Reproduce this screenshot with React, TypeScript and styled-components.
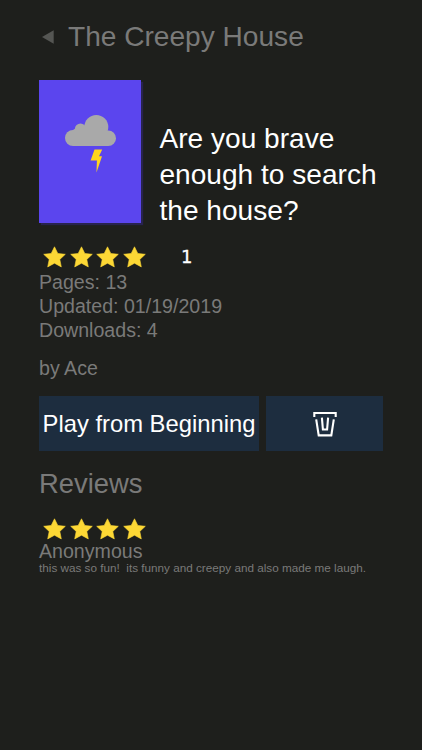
import React from "react";
import styled, { createGlobalStyle } from "styled-components";

const GlobalStyle = createGlobalStyle`
  * { box-sizing: border-box; }
  body {
    margin: 0;
    background: #1e1f1c;
    font-family: "Liberation Sans", Arial, sans-serif;
    color: #7a7a79;
  }
  h1, h2, p { margin: 0; font-weight: 400; }
`;

const Page = styled.main`
  display: flex;
  flex-direction: column;
  height: 750px;
  padding: 21px 39px 0 39px;
  overflow: hidden;
  background: #1e1f1c;
`;

const Header = styled.header`
  display: flex;
  align-items: center;
  height: 32px;
  padding-left: 3px;
`;

const BackButton = styled.button`
  display: flex;
  width: 26px;
  padding: 0;
  border: 0;
  background: none;
`;

const Title = styled.h1`
  font-size: 28.1px;
  line-height: 32px;
  white-space: nowrap;
`;

const Summary = styled.section`
  display: flex;
  align-items: flex-end;
  height: 143px;
  margin-top: 27px;
`;

const Cover = styled.div`
  flex: none;
  width: 102px;
  height: 143px;
  background: #5b45ee;
  box-shadow: 2px 2px 1px #28234d;
`;

const Tagline = styled.p`
  width: 240px;
  margin-left: 18.5px;
  margin-right: -17px;
  margin-bottom: -6px;
  font-size: 28.1px;
  line-height: 36px;
  color: #fff;
`;

const Rating = styled.div<{ $top: number }>`
  display: flex;
  align-items: center;
  height: 24px;
  margin-top: ${(p) => p.$top}px;
  padding-left: 4px;
`;

const Stars = styled.div`
  display: flex;
  gap: 3.7px;
`;

const RatingCount = styled.span`
  margin-left: 35px;
  font-family: "DejaVu Sans", sans-serif;
  font-size: 18px;
  line-height: 24px;
  color: #fff;
  -webkit-text-stroke: 0.3px #fff;
`;

const Meta = styled.div`
  margin-top: 1px;
  font-size: 19.6px;
  line-height: 24px;
`;

const Author = styled.p`
  margin-top: 14px;
  font-size: 19.6px;
  line-height: 24px;
`;

const Actions = styled.div`
  display: grid;
  grid-template-columns: 220px 117px;
  gap: 7px;
  height: 55px;
  margin-top: 16px;
`;

const ActionButton = styled.button`
  display: flex;
  align-items: center;
  justify-content: center;
  padding: 0;
  border: 0;
  background: #1d2d3f;
  color: #fff;
  font-family: inherit;
  font-size: 23.8px;
  line-height: 28px;
  white-space: nowrap;
`;

const SectionTitle = styled.h2`
  margin-top: 17px;
  font-size: 27.4px;
  line-height: 32px;
`;

const Reviewer = styled.p`
  margin-top: -1px;
  font-size: 19.6px;
  line-height: 22px;
`;

const ReviewText = styled.p`
  font-size: 11.73px;
  line-height: 12px;
  white-space: pre;
`;

const Star = () => (
  <svg width="23" height="22" viewBox="0 0 23 22" aria-hidden="true">
    <path
      fill="#fdd835"
      stroke="#fdd835"
      strokeWidth=".6"
      strokeLinejoin="round"
      d="M11.5.8 14.8 7.5 22.3 8.3 16.8 13.4 18.3 20.9 11.5 17.2 4.7 20.9 6.2 13.4.7 8.3 8.2 7.5Z"
    />
  </svg>
);

const StarRow = ({ count }: { count: number }) => (
  <Stars aria-label={`${count} stars`}>
    {Array.from({ length: count }, (_, i) => (
      <Star key={i} />
    ))}
  </Stars>
);

const StormCloud = () => (
  <svg width="102" height="143" viewBox="0 0 102 143" aria-hidden="true">
    <g fill="#a9a9a9">
      <circle cx="34" cy="58" r="8" />
      <circle cx="41.5" cy="49" r="5.6" />
      <circle cx="57.3" cy="47" r="12" />
      <circle cx="69.3" cy="58.3" r="7.7" />
      <path d="M34 50 40 46H60L69 51V66H34Z" />
    </g>
    <path fill="#ffd51c" d="M55.5 69.5H63.2L60 76.2H63L57.5 92.5 57.9 80.6H51.6Z" />
  </svg>
);

const TrashIcon = () => (
  <svg width="24" height="26" viewBox="0 0 24 26" fill="none" stroke="#fff" strokeWidth="2.1" aria-hidden="true">
    <path d="M1.3 6V2H22.7V6" />
    <path d="M3.2 8.4 5.7 24.4H18.3L20.8 8.4" />
    <path d="M8.9 6.6 9.9 18.5H14.1L15.1 6.6" />
  </svg>
);

export default function App() {
  return (
    <>
      <GlobalStyle />
      <Page>
        <Header>
          <BackButton aria-label="Back">
            <svg width="12" height="14" viewBox="0 0 12 14">
              <path fill="#555653" d="M0 7 11.7.2V13.8Z" />
            </svg>
          </BackButton>
          <Title>The Creepy House</Title>
        </Header>
        <Summary>
          <Cover>
            <StormCloud />
          </Cover>
          <Tagline>Are you brave enough to search the house?</Tagline>
        </Summary>
        <Rating $top={22}>
          <StarRow count={4} />
          <RatingCount>1</RatingCount>
        </Rating>
        <Meta>
          <p>Pages: 13</p>
          <p>Updated: 01/19/2019</p>
          <p>Downloads: 4</p>
        </Meta>
        <Author>by Ace</Author>
        <Actions>
          <ActionButton>Play from Beginning</ActionButton>
          <ActionButton aria-label="Delete">
            <TrashIcon />
          </ActionButton>
        </Actions>
        <SectionTitle>Reviews</SectionTitle>
        <Rating $top={17}>
          <StarRow count={4} />
        </Rating>
        <Reviewer>Anonymous</Reviewer>
        <ReviewText>{"this was so fun!  its funny and creepy and also made me laugh."}</ReviewText>
      </Page>
    </>
  );
}
